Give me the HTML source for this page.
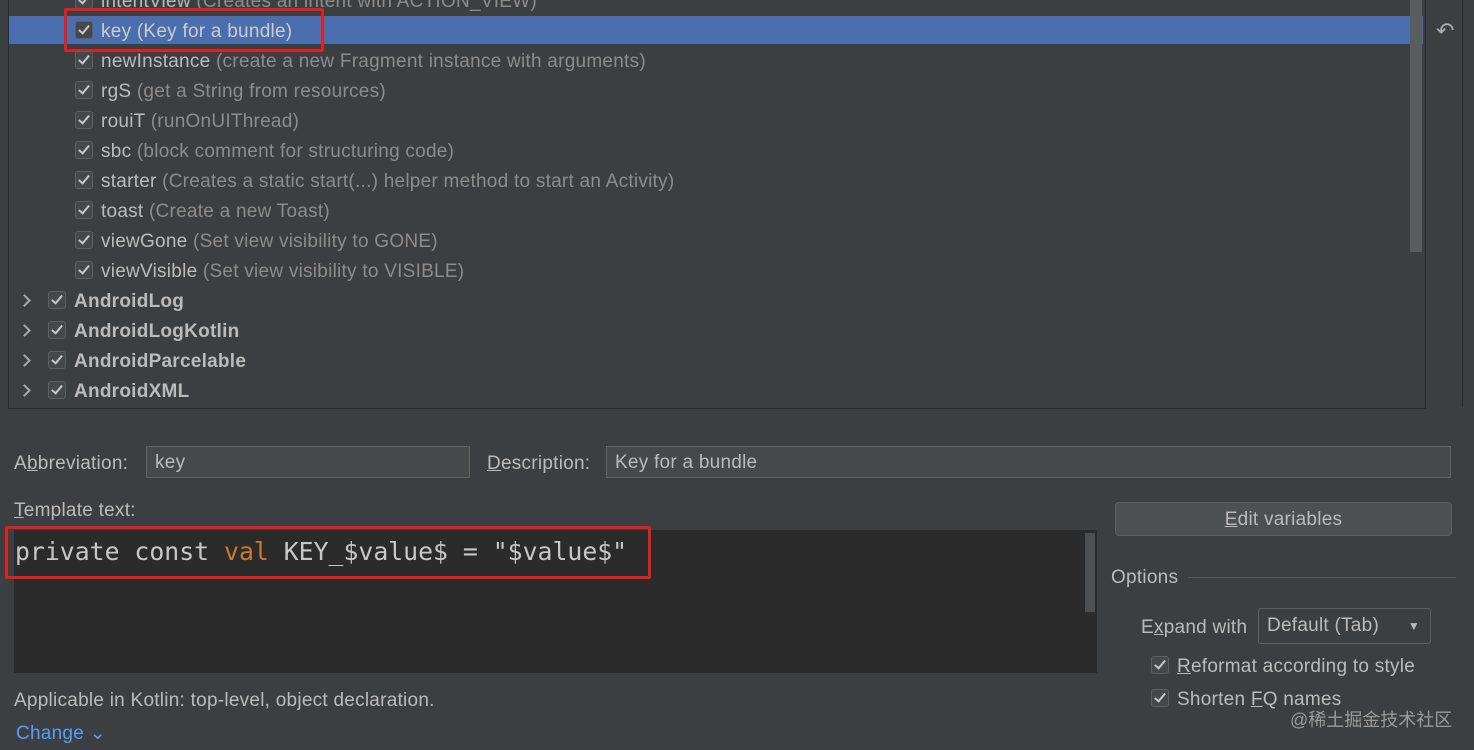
<!DOCTYPE html>
<html><head><style>
body{margin:0;width:1474px;height:750px;background:#3c3f41;font-family:"Liberation Sans","Noto Sans CJK SC",sans-serif;color:#bbbbbb;position:relative;overflow:hidden;font-size:19px;letter-spacing:0.25px}
.a{position:absolute}
.tree{left:8px;top:-2px;width:1416px;height:409px;border:1px solid #2b2b2b;background:#3c3f41}
.row{position:absolute;height:30px;line-height:30px;white-space:nowrap}
.cb{display:inline-block;width:16px;height:16px;border:1px solid #5e6060;border-radius:3px;background:#43494a;vertical-align:middle;position:relative;margin-right:8px;top:-2px}
.cb:after{content:"";position:absolute;left:5px;top:1px;width:4px;height:9px;border:solid #c8c8c8;border-width:0 2px 2px 0;transform:rotate(40deg)}
.g{color:#8c8c8c}
.b{font-weight:bold}
.arr{position:absolute;left:20px;width:7px;height:7px;border:solid #aaa;border-width:2px 2px 0 0;transform:rotate(45deg)}
.inp{background:#45494a;border:1px solid #646464;height:32px;line-height:32px;padding-left:8px;box-sizing:border-box}
u{text-decoration:underline}
</style></head><body>
<div class="a tree"></div>
<div class="a" style="left:9px;top:16px;width:1414px;height:28px;background:#4b6eaf"></div>
<div class="a" style="left:1410px;top:0;width:12px;height:252px;background:#5a5d5f"></div>
<div class="a" style="left:1462px;top:0;width:1px;height:407px;background:#2b2b2b"></div>
<div class="a" style="left:1436px;top:18px;font-size:22px;color:#aaa">&#x21B6;</div>
<div class="row" style="left:75px;top:-13px"><span class="cb"></span>intentView <span class="g">(Creates an intent with ACTION_VIEW)</span></div>
<div class="row" style="left:75px;top:17px;color:#ccc"><span class="cb"></span>key (Key for a bundle)</div>
<div class="a" style="left:64px;top:8px;width:260px;height:44px;border:3px solid #e02020;box-sizing:border-box;border-radius:2px"></div>
<div class="row" style="left:75px;top:47px"><span class="cb"></span>newInstance <span class="g">(create a new Fragment instance with arguments)</span></div>
<div class="row" style="left:75px;top:77px"><span class="cb"></span>rgS <span class="g">(get a String from resources)</span></div>
<div class="row" style="left:75px;top:107px"><span class="cb"></span>rouiT <span class="g">(runOnUIThread)</span></div>
<div class="row" style="left:75px;top:137px"><span class="cb"></span>sbc <span class="g">(block comment for structuring code)</span></div>
<div class="row" style="left:75px;top:167px"><span class="cb"></span>starter <span class="g">(Creates a static start(...) helper method to start an Activity)</span></div>
<div class="row" style="left:75px;top:197px"><span class="cb"></span>toast <span class="g">(Create a new Toast)</span></div>
<div class="row" style="left:75px;top:227px"><span class="cb"></span>viewGone <span class="g">(Set view visibility to GONE)</span></div>
<div class="row" style="left:75px;top:257px"><span class="cb"></span>viewVisible <span class="g">(Set view visibility to VISIBLE)</span></div>
<div class="row b" style="left:48px;top:287px"><span class="cb"></span>AndroidLog</div><div class="arr" style="top:296px"></div>
<div class="row b" style="left:48px;top:317px"><span class="cb"></span>AndroidLogKotlin</div><div class="arr" style="top:326px"></div>
<div class="row b" style="left:48px;top:347px"><span class="cb"></span>AndroidParcelable</div><div class="arr" style="top:356px"></div>
<div class="row b" style="left:48px;top:377px"><span class="cb"></span>AndroidXML</div><div class="arr" style="top:386px"></div>

<div class="a" style="left:14px;top:453px">A<u>b</u>breviation:</div>
<div class="a inp" style="left:146px;top:446px;width:324px">key</div>
<div class="a" style="left:487px;top:453px"><u>D</u>escription:</div>
<div class="a inp" style="left:606px;top:446px;width:845px">Key for a bundle</div>
<div class="a" style="left:14px;top:500px"><u>T</u>emplate text:</div>
<div class="a" style="left:14px;top:530px;width:1083px;height:143px;background:#2b2b2b"></div>
<div class="a" style="left:1085px;top:533px;width:10px;height:79px;background:#4d5052"></div>
<div class="a" style="left:15px;top:537px;font-family:'DejaVu Sans Mono','Liberation Mono',monospace;font-size:24.8px;letter-spacing:0;color:#c8c8c8;white-space:pre">private const <span style="color:#cc7832">val</span> KEY_$value$ = "$value$"</div>
<div class="a" style="left:5px;top:526px;width:646px;height:53px;border:3px solid #e02020;box-sizing:border-box;border-radius:2px"></div>
<div class="a" style="left:14px;top:690px">Applicable in Kotlin: top-level, object declaration.</div>
<div class="a" style="left:16px;top:722px;color:#589df6">Change &#8964;</div>

<div class="a" style="left:1115px;top:502px;width:337px;height:34px;border:1px solid #5e6060;border-radius:4px;background:#4c5052;text-align:center;line-height:34px;box-sizing:border-box"><u>E</u>dit variables</div>
<div class="a" style="left:1111px;top:567px">Options</div>
<div class="a" style="left:1188px;top:577px;width:268px;height:1px;background:#555"></div>
<div class="a" style="left:1141px;top:617px">E<u>x</u>pand with</div>
<div class="a" style="left:1258px;top:608px;width:173px;height:36px;border:1px solid #5e6060;border-radius:3px;box-sizing:border-box;line-height:34px;padding-left:8px">Default (Tab)<span style="position:absolute;right:10px;top:0;font-size:12px;color:#bbb">&#9660;</span></div>
<div class="a" style="left:1151px;top:656px"><span class="cb"></span><u>R</u>eformat according to style</div>
<div class="a" style="left:1151px;top:689px"><span class="cb"></span>Shorten <u>F</u>Q names</div>
<div class="a" style="left:1290px;top:706px;color:#9a9a9a;font-size:18px;letter-spacing:0">@稀土掘金技术社区</div>
</body></html>
